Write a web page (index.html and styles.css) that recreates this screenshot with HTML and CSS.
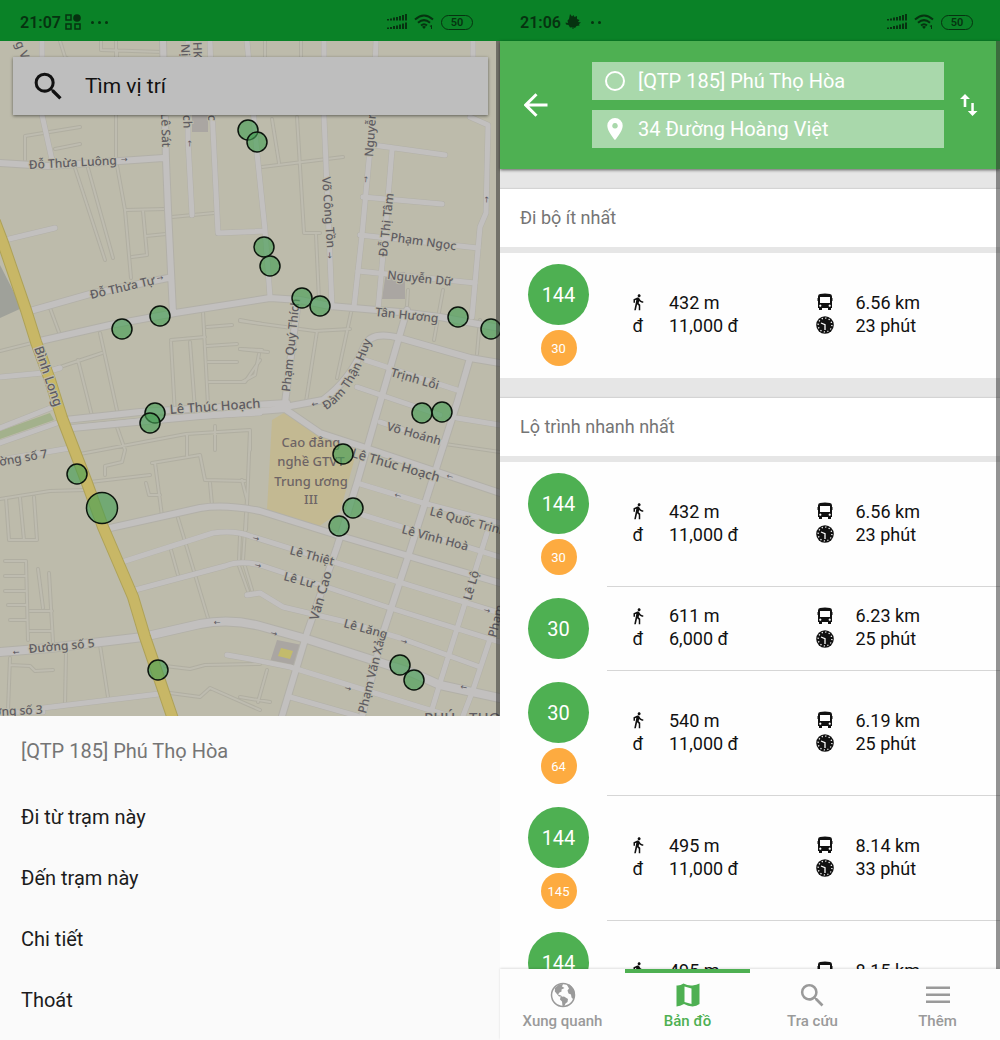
FILE: index.html
```html
<!DOCTYPE html>
<html lang="vi">
<head>
<meta charset="utf-8">
<meta name="viewport" content="width=device-width, initial-scale=1">
<title>Bản đồ xe buýt</title>
<link rel="stylesheet" href="styles.css">
</head>
<body>
<svg class="sprite" aria-hidden="true">
  <symbol id="i-search" viewBox="0 0 24 24"><path d="M15.500 14h-.79l-.28-.27A6.470 6.470 0 0 0 16 9.500 6.500 6.500 0 1 0 9.500 16c1.610 0 3.090-.59 4.230-1.570l.27.28v.79l5 4.990L20.490 19l-4.990-5zm-6 0C7.010 14 5 11.990 5 9.500S7.010 5 9.500 5 14 7.010 14 9.500 11.990 14 9.500 14z"/></symbol>
  <symbol id="i-signal" viewBox="0 0 20 16"><path d="M0 5h2v1.500H0zM3 4.500h2v2H3zM6 3.500h2v3H6zM9 3h2v3.500H9zM12 2h2v4.500h-2zM15 1h2v5.500h-2zM18 0h2v6.500H18zM0 13.500h2V15H0zM3 13h2v2H3zM6 12h2v3H6zM9 11.500h2V15H9zM12 10.500h2V15h-2zM15 9.500h2V15h-2zM18 8.500h2V15H18z"/></symbol>
  <symbol id="i-wifi" viewBox="0 0 20 16"><path d="M1 5.500Q10-2.500 19 5.500M4 8.700Q10 3.500 16 8.700M7 11.500Q10 9 13 11.500" fill="none" stroke="currentColor" stroke-width="2"/><path d="M8 12.700Q10 11.500 12 12.700L10 15zM15.500 12l2.500-1v4h-1v-2z"/></symbol>
  <symbol id="i-walk" viewBox="0 0 24 24"><path d="M13.500 5.500c1.100 0 2-.9 2-2s-.9-2-2-2-2 .9-2 2 .9 2 2 2zM9.800 8.900L7 23h2.100l1.800-8 2.100 2v6h2v-7.500l-2.100-2 .6-3C14.800 12 16.800 13 19 13v-2c-1.900 0-3.500-1-4.300-2.400l-1-1.600c-.4-.6-1-1-1.700-1-.3 0-.5.1-.8.1L6 8.300V13h2V9.600l1.800-.7"/></symbol>
  <symbol id="i-bus" viewBox="0 0 18 18"><path fill-rule="evenodd" d="M4 1Q9 .2 14 1 16 1.300 16 3.500V5h.5v3H16v7h-1v1.500q0 .5-.5.500h-2q-.5 0-.5-.5V15H6v1.500q0 .5-.5.500h-2q-.5 0-.5-.5V15H2V8h-.5V5H2V3.500Q2 1.300 4 1zM4 4v6h10V4zm.3 7.600a1.100 1.100 0 1 0 .01 0zm9.400 0a1.100 1.100 0 1 0 .01 0z"/></symbol>
  <symbol id="i-clock" viewBox="0 0 18 18"><circle cx="9" cy="9" r="8.800"/><circle cx="9" cy="9" r="6.900" fill="none" stroke="#fff" stroke-width="1.300" stroke-dasharray="1.200 2.413"/><path d="M5 7L9 8.700V14" fill="none" stroke="#fff" stroke-width="1.300"/></symbol>
  <symbol id="i-globe" viewBox="0 0 26 26"><circle cx="13" cy="13" r="11.500" fill="none" stroke="currentColor" stroke-width="1.500"/><path d="M5 6L9 2.500 13 2l-1 2.500L14.500 6l-3 1.500v2L9.500 10.500l-1.500 2 3 1 1.500 1.200L9 14.500 4.800 9.500zM10.500 15l3.500-.5 4 2.500-.5 3-2 1.500L14 25l-1.500-1-.5-4.500-2-2zM17 3l2.500-.5 4.500 5L25 13l-1.500 4.500-2-2-.5-3-2.500-1-1-3L19 6.500z"/></symbol>
  <symbol id="i-map" viewBox="0 0 24 24"><path fill-rule="evenodd" d="M.5 2.500Q4 3 7.500.500q4.500 2.500 9 2 4-.5 7-2v20.500q-3 2-7 2.500-4.500-.5-8.500-2.500-4 2-7.500 2.500zM8.500 3.500v15.500l7 2V5.500z"/></symbol>
</svg>

<main class="app">
  <section class="screen">
    <header class="status">
      <span class="time">21:07</span>
      <svg class="status-icon" viewBox="0 0 16 16"><path d="M1 1h5v5H1zM1 10h5v5H1zM10 10h5v5h-5z" fill="none" stroke="currentColor" stroke-width="1.500"/><circle cx="12" cy="4" r="3.800"/></svg>
      <span class="dots"><i></i><i></i><i></i></span>
      <svg class="signal"><use href="#i-signal"/></svg>
      <svg class="wifi"><use href="#i-wifi"/></svg>
      <span class="battery">50</span>
    </header>

    <div class="map">
      <svg class="map-canvas" viewBox="0 41 500 675" preserveAspectRatio="xMidYMid slice" role="img" aria-label="Bản đồ trạm xe buýt">
        <defs>
          <g id="lanes">
            <path d="M60 41L65 57L70 60M101 41V50L163 52M117 57V50M116 41L116 160L125 210L131 278M126 210L165 209M143 211L147 255L132 257M146 236L166 234M172 217L214 213M25 160V136L80 127M55 149L80 144M75 168L105 260M88 168L113 258M50 308L60 335M100 333L118 415M0 351L40 341M45 372L102 353M78 360L92 416M171 342L175 415M190 342L195 410M171 340L205 337M203 312L208 405M207 327L232 325M207 346L237 344M208 362L237 362M209 382L245 382L260 360M240 320L262 324M240 349L262 350"/>
            <path d="M272 119L279 163M297 117L304 233L320 233M262 167L343 157M240 321L315 331L350 329M317 331L306 402M352 308L337 378M316 235L319 300M240 349L268 352M259 354L255 375L242 382M408 290L406 320M443 290L434 340M480 320L477 354M265 41V57M301 41V57"/>
            <path d="M80 454L186 434L250 430M117 427L125 450L122 462L105 466V475M90 482L150 475M187 434V456M215 426V450M250 430L246 530M152 463L200 455L205 480L245 481M155 463L162 516M146 483L149 495L160 495M210 483L212 505M0 499L50 491L85 490M6 498L9 540L37 540L34 497M20 498L24 540M5 561H26L28 640M5 576H25M5 591H25M8 605H26M10 620H27M38 569L43 608M49 573L53 642M30 611H52M30 631H52M178 518L208 618M171 550L178 575M240 536L239 560M238 563L248 591M66 652L65 705M100 645L108 697M10 658L8 710M10 665L30 666L35 671L53 670M165 666L190 669L205 665L260 664M170 693L200 697L210 688L260 710M240 697L270 702M267 670L258 702M250 430V450M242 480L247 500L243 560L252 590M445 444L500 452"/>
          </g>
          <g id="streets">
            <path d="M5 240L55 228M188 41V140L192 215M210 41L213 130L218 233L265 231M247 41L257 153L265 230L270 297M373 145L445 155M392 150L387 210L378 310M363 197L442 204M360 235L478 248M358 271L475 283M42 41V115L52 160M0 377L43 373L60 368M70 448L0 460M365 360L457 390M357 387L440 415M457 418L500 425M380 422L443 443M0 428L53 407M0 443L60 422L72 428L167 418L260 413"/>
            <path d="M122 562L213 533Q235 530 250 536L337 563L500 613M135 590L225 566Q240 560 260 565L387 607L500 642M247 595L260 593L283 607L350 623L400 638L480 667M227 655L250 659L290 667L420 707L450 716M43 708L167 693M290 697L357 716M357 483L423 503L500 523M363 515L500 557M487 533L440 683L430 716M493 630L473 690L463 716M0 712H43"/>
            <path d="M376 41L373 117L362 235L354 307M470 117L488 125L486 213L480 227L472 317M473 41V60M324 41V117L330 257L332 307"/>
          </g>
          <g id="roads">
            <path d="M0 163L48 166L163 158M163 41L166 160L168 210L173 313M30 311L90 294L168 278M40 341L110 325L175 313L270 298L300 300L330 306L400 312L440 317L500 328M298 300L285 403M407 310L375 420L357 483L337 547L307 633L282 716M285 407L323 400Q350 380 364 347Q370 330 400 338L470 358L500 363M470 358L457 403L427 497L407 560L383 633L362 716"/>
            <path d="M65 420L140 412L287 403M72 428L200 416L285 409L320 433L363 447L500 493M110 528L200 508Q225 504 260 511L337 535L500 583"/>
          </g>
          <g id="avenue"><path d="M0 652L50 648L143 637L200 624Q230 618 260 626L310 640L413 673L440 685L500 698"/></g>
          <path id="highway" d="M-5 222L3 243L26 310L36 342L50 380L62 418L87 483L103 527L133 597L145 637L158 675L174 722"/>
          <path id="dam-than-huy" d="M326 410Q354 394 372 338"/>
        </defs>
        <rect class="land" x="-500" y="-500" width="1600" height="1800"/>
        <path class="plaza" d="M0 265L22 308L0 318z"/>
        <path class="block" d="M192 110H208V132H192zM386 272H405V299H382z"/>
        <path class="campus" d="M272 420L287 411L325 438L357 450L340 512L318 527L267 510z"/>
        <path class="block" d="M277 640L302 645L296 669L270 662z"/>
        <path class="square" d="M281 648L293 651L290 659L278 656z"/>
        <path class="park" d="M0 431L50 413L54 420L0 439z"/>
        <use href="#lanes" class="lane-edge"/><use href="#lanes" class="lane-fill"/>
        <use href="#streets" class="street-edge"/><use href="#roads" class="road-edge"/><use href="#avenue" class="avenue-edge"/>
        <use href="#streets" class="street-fill"/><use href="#roads" class="road-fill"/><use href="#avenue" class="avenue-fill"/>
        <use href="#highway" class="highway-edge"/><use href="#highway" class="highway-fill"/>

        <g class="arrows">
          <text transform="translate(121 162)">→</text><text transform="translate(157 281) rotate(-8)">→</text><text transform="translate(368 183) rotate(-84)">→</text><text transform="translate(489 203) rotate(-88)">→</text><text transform="translate(192 147) rotate(-88)">→</text><text transform="translate(327 252) rotate(88)">→</text><text transform="translate(312 407) rotate(-8)">←</text><text transform="translate(394 497) rotate(15)">←</text><text transform="translate(252 540) rotate(15)">→</text><text transform="translate(254 567) rotate(15)">→</text><text transform="translate(270 635) rotate(15)">→</text><text transform="translate(344 690) rotate(15)">→</text><text transform="translate(400 643) rotate(15)">→</text><text transform="translate(214 625)">←</text><text transform="translate(13 655) rotate(-4)">←</text><text transform="translate(446 478) rotate(15)">←</text><text transform="translate(460 689) rotate(12)">←</text><text transform="translate(483 612) rotate(15)">→</text>
        </g>
        <g class="labels">
          <text transform="translate(29 169) rotate(-3)">Đỗ Thừa Luông</text>
          <text transform="translate(161 113) rotate(88)">Lê Sát</text>
          <text transform="translate(183 115) rotate(88)">ch</text>
          <text transform="translate(208 115) rotate(88)">c</text>
          <text transform="translate(15 43) rotate(68)">g V</text>
          <text transform="translate(181 44) rotate(88)">Nị</text>
          <text transform="translate(193 42) rotate(88)">HK</text>
          <text transform="translate(91 299) rotate(-13)">Đỗ Thừa Tự</text>
          <text class="main" transform="translate(34 348) rotate(71)">Bình Long</text>
          <text class="main" transform="translate(170 414) rotate(-4)">Lê Thúc Hoạch</text>
          <text transform="translate(290 392) rotate(-84)">Phạm Quý Thích</text>
          <text transform="translate(322 177) rotate(86)">Võ Công Tồn</text>
          <text transform="translate(373 157) rotate(-86)">Nguyễn</text>
          <text transform="translate(387 257) rotate(-84)">Đỗ Thị Tâm</text>
          <text transform="translate(390 241) rotate(8)">Phạm Ngọc</text>
          <text transform="translate(387 279) rotate(6)">Nguyễn Dữ</text>
          <text transform="translate(375 316) rotate(6)">Tân Hương</text>
          <text><textPath href="#dam-than-huy">Đàm Thận Huy</textPath></text>
          <text transform="translate(390 376) rotate(16)">Trịnh Lỗi</text>
          <text transform="translate(386 430) rotate(16)">Võ Hoánh</text>
          <text class="main" transform="translate(351 457) rotate(16)">Lê Thúc Hoạch</text>
          <text transform="translate(429 515) rotate(15)">Lê Quốc Trinh</text>
          <text transform="translate(401 533) rotate(15)">Lê Vĩnh Hoà</text>
          <text transform="translate(289 554) rotate(15)">Lê Thiệt</text>
          <text transform="translate(283 580) rotate(15)">Lê Lư</text>
          <text class="main" transform="translate(318 621) rotate(-74)">Văn Cao</text>
          <text transform="translate(366 714) rotate(-76)">Phạm Văn Xảo</text>
          <text transform="translate(343 627) rotate(15)">Lê Lăng</text>
          <text transform="translate(471 601) rotate(-74)">Lê Lộ</text>
          <text transform="translate(496 638) rotate(-76)">Phạm</text>
          <text transform="translate(29 653) rotate(-5)">Đường số 5</text>
          <text transform="translate(-17 469) rotate(-10)">Đường số 7</text>
          <text transform="translate(-23 717) rotate(-3)">Đường số 3</text>
          <text class="district" transform="translate(424 723)">PHÚ</text>
          <text class="district" transform="translate(469 723)">THỌ</text>
          <g class="place">
            <text x="311" y="447">Cao đẳng</text><text x="311" y="466">nghề GTVT</text><text x="311" y="486">Trung ương</text><text x="311" y="504">III</text>
          </g>
        </g>
        <g class="stops">
          <circle cx="248" cy="130" r="10"/><circle cx="257" cy="142" r="10"/><circle cx="264" cy="247" r="10"/><circle cx="270" cy="266" r="10"/><circle cx="302" cy="298" r="10"/><circle cx="320" cy="306" r="10"/><circle cx="458" cy="317" r="10"/><circle cx="491" cy="329" r="10"/><circle cx="160" cy="316" r="10"/><circle cx="122" cy="329" r="10"/><circle cx="155" cy="413" r="10"/><circle cx="150" cy="423" r="10"/><circle cx="422" cy="413" r="10"/><circle cx="442" cy="412" r="10"/><circle cx="343" cy="454" r="10"/><circle cx="353" cy="508" r="10"/><circle cx="339" cy="526" r="10"/><circle cx="77" cy="474" r="10"/><circle cx="102" cy="508" r="15.500"/><circle cx="158" cy="670" r="10"/><circle cx="400" cy="665" r="10"/><circle cx="414" cy="680" r="10"/>
        </g>
      </svg>
      <label class="search">
        <svg class="search-icon"><use href="#i-search"/></svg>
        <input type="text" placeholder="Tìm vị trí" aria-label="Tìm vị trí">
      </label>
    </div>

    <div class="sheet">
      <h2>[QTP 185] Phú Thọ Hòa</h2>
      <button type="button">Đi từ trạm này</button>
      <button type="button">Đến trạm này</button>
      <button type="button">Chi tiết</button>
      <button type="button">Thoát</button>
    </div>
  </section>

  <section class="screen">
    <header class="status">
      <span class="time">21:06</span>
      <svg class="status-icon" viewBox="0 0 16 16"><path d="M5 0l2 2.500L8.500 1l1 2L12 2v3l2.500 1L13 8l3 .5-2 1.500.5 1.500-3 .5L10 14l-1.500-.7V15h-1v-1.700L5 13.500 3.500 11 1 10.500l-.5-2L3 9 2.500 6.500 4 5z"/></svg>
      <span class="dots"><i></i><i></i></span>
      <svg class="signal"><use href="#i-signal"/></svg>
      <svg class="wifi"><use href="#i-wifi"/></svg>
      <span class="battery">50</span>
    </header>

    <div class="content">
      <header class="planner">
        <button type="button" class="back" aria-label="Quay lại"><svg viewBox="0 0 24 24"><path d="M23.500 12H2M12.500 1.200L1.700 12l10.800 10.800"/></svg></button>
        <div class="fields">
          <label class="field"><svg viewBox="0 0 22 22"><circle cx="11" cy="11" r="9" class="ring"/></svg><input type="text" value="[QTP 185] Phú Thọ Hòa" aria-label="Điểm đi"></label>
          <label class="field"><svg viewBox="0 0 22 22"><path fill-rule="evenodd" d="M11 0a7.700 7.700 0 0 1 7.700 7.700C18.700 13.500 11 22 11 22S3.300 13.500 3.300 7.700A7.700 7.700 0 0 1 11 0zm0 5a2.800 2.800 0 1 0 .01 0z"/></svg><input type="text" value="34 Đường Hoàng Việt" aria-label="Điểm đến"></label>
        </div>
        <button type="button" class="swap" aria-label="Đổi chiều"><svg viewBox="0 0 18 22"><path d="M5 0l5 5H6.300v8H3.700V5H0zM12.500 22l-4.700-5h3.500V9h2.500v8h3.700z"/></svg></button>
      </header>

      <div class="results">
        <h3>Đi bộ ít nhất</h3>
        <ul class="routes">
          <li class="route"><div class="lines"><span class="line">144</span><span class="transfer">30</span></div>
            <div class="facts"><div class="pair"><svg><use href="#i-walk"/></svg><span>432 m</span><b>đ</b><span>11,000 đ</span></div><div class="pair"><svg><use href="#i-bus"/></svg><span>6.56 km</span><svg><use href="#i-clock"/></svg><span>23 phút</span></div></div></li>
        </ul>
        <h3>Lộ trình nhanh nhất</h3>
        <ul class="routes">
          <li class="route"><div class="lines"><span class="line">144</span><span class="transfer">30</span></div>
            <div class="facts"><div class="pair"><svg><use href="#i-walk"/></svg><span>432 m</span><b>đ</b><span>11,000 đ</span></div><div class="pair"><svg><use href="#i-bus"/></svg><span>6.56 km</span><svg><use href="#i-clock"/></svg><span>23 phút</span></div></div></li>
          <li class="route"><div class="lines"><span class="line">30</span></div>
            <div class="facts"><div class="pair"><svg><use href="#i-walk"/></svg><span>611 m</span><b>đ</b><span>6,000 đ</span></div><div class="pair"><svg><use href="#i-bus"/></svg><span>6.23 km</span><svg><use href="#i-clock"/></svg><span>25 phút</span></div></div></li>
          <li class="route"><div class="lines"><span class="line">30</span><span class="transfer">64</span></div>
            <div class="facts"><div class="pair"><svg><use href="#i-walk"/></svg><span>540 m</span><b>đ</b><span>11,000 đ</span></div><div class="pair"><svg><use href="#i-bus"/></svg><span>6.19 km</span><svg><use href="#i-clock"/></svg><span>25 phút</span></div></div></li>
          <li class="route"><div class="lines"><span class="line">144</span><span class="transfer">145</span></div>
            <div class="facts"><div class="pair"><svg><use href="#i-walk"/></svg><span>495 m</span><b>đ</b><span>11,000 đ</span></div><div class="pair"><svg><use href="#i-bus"/></svg><span>8.14 km</span><svg><use href="#i-clock"/></svg><span>33 phút</span></div></div></li>
          <li class="route"><div class="lines"><span class="line">144</span><span class="transfer"></span></div>
            <div class="facts"><div class="pair"><svg><use href="#i-walk"/></svg><span>495 m</span></div><div class="pair"><svg><use href="#i-bus"/></svg><span>8.15 km</span></div></div></li>
        </ul>
      </div>
    </div>

    <nav class="tabs">
      <a href="#around"><svg><use href="#i-globe"/></svg>Xung quanh</a>
      <a href="#map" class="active" aria-current="page"><svg class="small"><use href="#i-map"/></svg>Bản đồ</a>
      <a href="#lookup"><svg class="large"><use href="#i-search"/></svg>Tra cứu</a>
      <a href="#more"><svg viewBox="0 0 26 26"><path d="M1 4.500h24v2.500H1zM1 11.500h24V14H1zM1 18.500h24V21H1z"/></svg>Thêm</a>
    </nav>
  </section>
</main>
</body>
</html>
```

FILE: styles.css
```css
* { box-sizing: border-box; }

body {
  margin: 0;
  font-family: Roboto, "Noto Sans", sans-serif;
  color: #111;
  background: #fafafa;
}

h2, h3, ul { margin: 0; padding: 0; font-weight: 400; list-style: none; }
svg { display: block; fill: currentColor; }
button, input { font: inherit; color: inherit; border: 0; background: none; padding: 0; }
.sprite { position: absolute; width: 0; height: 0; }

.app {
  display: grid;
  grid-template-columns: 1fr 1fr;
  height: 100vh;
}

.screen {
  display: flex;
  flex-direction: column;
  min-width: 0;
  min-height: 0;
}

/* Status bar */
.status {
  display: flex;
  align-items: center;
  flex: none;
  height: 41px;
  padding: 3px 27px 0 20px;
  background: #0a8227;
  color: #063310;
}
.time { font-size: 16px; font-weight: 600; }
.status-icon { width: 16px; height: 16px; margin: 0 10px 0 4px; }
.dots { display: flex; gap: 4px; margin-right: auto; }
.dots i { width: 3px; height: 3px; border-radius: 50%; background: currentColor; }
.signal { width: 20px; height: 16px; }
.wifi { width: 20px; height: 16px; margin: 0 7px; }
.battery {
  width: 32px;
  height: 15px;
  border: 1px solid currentColor;
  border-radius: 8px;
  font-size: 11px;
  font-weight: 600;
  line-height: 13px;
  text-align: center;
}

/* Map */
.map {
  position: relative;
  flex: 1;
  min-height: 0;
  overflow: hidden;
  padding: 16px 12px 0 13px;
  background: #bbb9a9;
}
.map-canvas { position: absolute; inset: 0; width: 100%; height: 100%; }
.map::after, .content::after {
  content: "";
  position: absolute;
  inset: 0 0 0 auto;
  width: 4px;
  background: rgba(40, 40, 40, .5);
}
.search {
  position: relative;
  display: flex;
  align-items: center;
  gap: 18px;
  height: 58px;
  padding-left: 17px;
  background: #bebebe;
  box-shadow: 0 1px 3px rgba(0, 0, 0, .5);
}
.search-icon { width: 37px; height: 37px; flex: none; }
.search input { flex: 1; min-width: 0; font-size: 21px; outline: 0; }
.search input::placeholder { color: #111; opacity: 1; }

.land { fill: #bdbbab; }
.block { fill: #aaa6a2; }
.plaza { fill: #9fa19a; }
.campus { fill: #c3b992; }
.square { fill: #c3bb6c; }
.park { fill: #a3b18c; }
.lane-edge, .lane-fill, .street-edge, .street-fill, .road-edge, .road-fill,
.avenue-edge, .avenue-fill, .highway-edge, .highway-fill {
  fill: none;
  stroke-linejoin: round;
  stroke-linecap: round;
}
.lane-edge { stroke: #b0aea1; stroke-width: 4px; }
.lane-fill { stroke: #bebcb0; stroke-width: 2px; }
.street-edge { stroke: #b2b0a8; stroke-width: 6px; }
.street-fill { stroke: #c2c0bf; stroke-width: 5px; }
.road-edge { stroke: #b2b0a8; stroke-width: 8px; }
.road-fill { stroke: #c2c0bf; stroke-width: 6px; }
.avenue-edge { stroke: #b2b0a8; stroke-width: 10px; }
.avenue-fill { stroke: #c2c0bf; stroke-width: 8px; }
.highway-edge { stroke: #aea258; stroke-width: 12px; }
.highway-fill { stroke: #c8b766; stroke-width: 10px; }
.labels {
  font: 500 12px "Noto Sans", "Open Sans", sans-serif;
  fill: #5f5c62;
  stroke: #bdbbab;
  stroke-width: 2px;
  paint-order: stroke;
}
.labels .main { font-size: 13px; }
.labels .district { font-size: 15px; }
.labels .place { font-size: 13px; text-anchor: middle; fill: #6d6465; stroke: none; }
.arrows { font: 8px "DejaVu Sans", sans-serif; fill: #5c5960; }
.stops { fill: rgba(68, 158, 82, .62); stroke: #0c150d; stroke-width: 1.5px; }

/* Stop menu */
.sheet {
  display: flex;
  flex-direction: column;
  flex: none;
  padding-bottom: 9px;
  background: #fafafa;
  font-size: 20px;
}
.sheet h2 { padding: 0 21px; font-size: 20px; line-height: 71px; color: #757575; }
.sheet button { padding: 0 21px; line-height: 61px; text-align: left; color: #1c1c1c; }

/* Trip planner */
.content {
  position: relative;
  display: flex;
  flex-direction: column;
  flex: 1;
  min-height: 0;
}
.planner {
  position: relative;
  display: grid;
  grid-template-columns: 92px 1fr 56px;
  align-items: center;
  flex: none;
  padding: 21px 0;
  background: #4eb052;
  color: #fff;
  box-shadow: 0 1px 3px rgba(0, 0, 0, .6);
}
.back { justify-self: start; margin-left: 24px; }
.back svg { width: 24px; height: 24px; fill: none; stroke: currentColor; stroke-width: 3px; }
.swap { justify-self: start; margin-left: 16px; }
.swap svg { width: 18px; height: 22px; }
.fields { display: flex; flex-direction: column; gap: 10px; min-width: 0; }
.field {
  display: flex;
  align-items: center;
  gap: 12px;
  height: 38px;
  padding-left: 12px;
  background: #a9d8ab;
}
.field svg { width: 22px; height: 22px; flex: none; }
.field .ring { fill: none; stroke: currentColor; stroke-width: 2px; }
.field input { flex: 1; min-width: 0; font-size: 20px; }

.results {
  flex: 1;
  min-height: 0;
  overflow: hidden;
  background: #e6e6e6;
}
.results h3 {
  margin: 20px 0 6px;
  padding: 0 20px;
  background: #fff;
  box-shadow: 0 -1px 1px rgba(0, 0, 0, .08);
  font-size: 18px;
  line-height: 58px;
  color: #757575;
}
.route { display: flex; background: #fefefe; }
.lines {
  display: flex;
  flex-direction: column;
  align-items: center;
  gap: 5px;
  margin: 0 18px 0 28px;
  padding: 11px 0 12px;
}
.line, .transfer { display: grid; place-items: center; border-radius: 50%; color: #fff; }
.line { width: 61px; height: 61px; background: #4eb052; font-size: 20px; }
.transfer { width: 36px; height: 36px; background: #fdab40; font-size: 13px; }
.facts {
  display: grid;
  grid-template-columns: 1fr 1fr;
  align-items: center;
  flex: 1;
  padding: 0 20px 3px 0;
  border-bottom: 1px solid #d6d6d6;
  font-size: 18px;
  line-height: 23px;
}
.route:last-child .facts { border-bottom-color: transparent; }
.pair {
  display: grid;
  grid-template-columns: 62px 1fr;
  grid-template-rows: 23px 23px;
  align-items: center;
}
.pair svg, .pair b { justify-self: center; }
.pair svg { width: 18px; height: 18px; }
.pair b { font-weight: 400; }

/* Bottom tabs */
.tabs {
  position: relative;
  display: grid;
  grid-template-columns: repeat(4, 1fr);
  flex: none;
  height: 71px;
  background: #fdfdfd;
  box-shadow: 0 -1px 2px rgba(0, 0, 0, .12);
}
.tabs a {
  display: grid;
  grid-template-rows: 34px 18px;
  place-items: center;
  align-content: start;
  padding-top: 5px;
  border-top: 4px solid transparent;
  font-size: 15px;
  font-weight: 500;
  line-height: 18px;
  color: #9a9a9a;
  text-decoration: none;
}
.tabs .active { border-color: #4eb052; color: #4eb052; }
.tabs svg { width: 26px; height: 26px; }
.tabs .small { width: 24px; height: 24px; }
.tabs .large { width: 31px; height: 31px; }
```
